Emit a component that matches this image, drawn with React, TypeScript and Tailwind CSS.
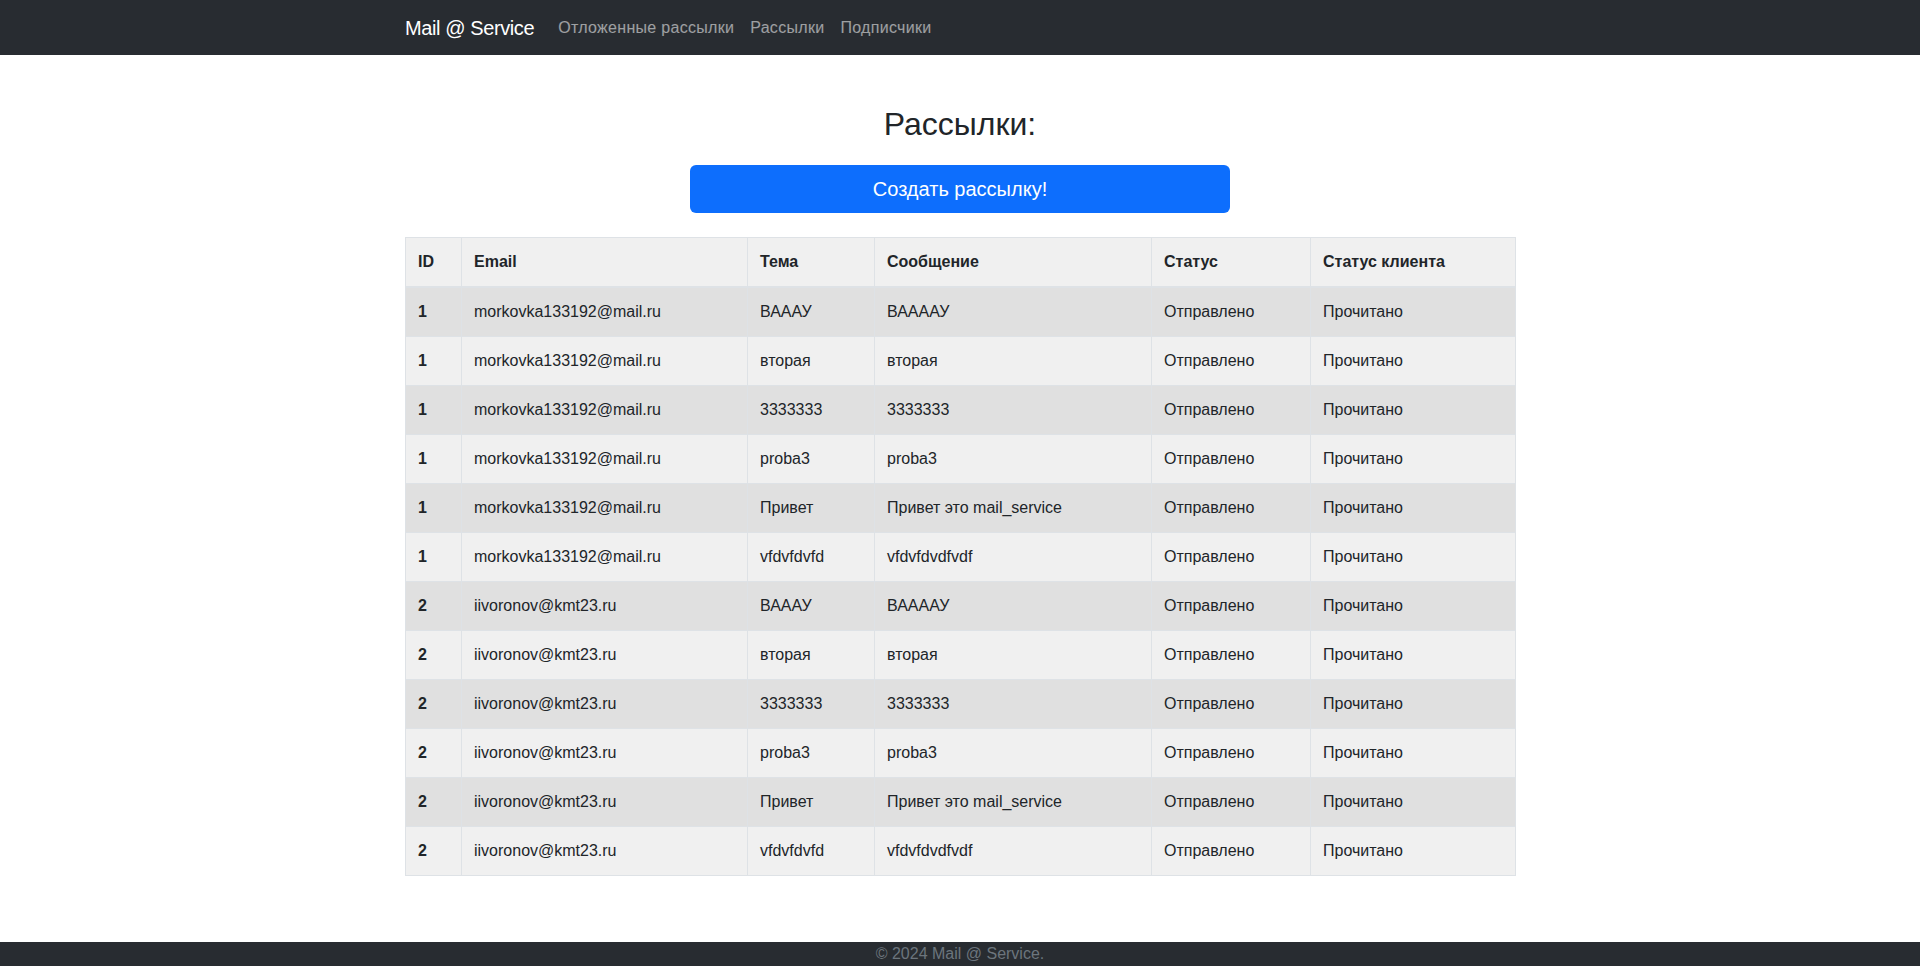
import React from "react";

const rows = [
  { id: 1, email: "morkovka133192@mail.ru", subject: "ВАААУ", message: "ВААААУ" },
  { id: 1, email: "morkovka133192@mail.ru", subject: "вторая", message: "вторая" },
  { id: 1, email: "morkovka133192@mail.ru", subject: "3333333", message: "3333333" },
  { id: 1, email: "morkovka133192@mail.ru", subject: "proba3", message: "proba3" },
  { id: 1, email: "morkovka133192@mail.ru", subject: "Привет", message: "Привет это mail_service" },
  { id: 1, email: "morkovka133192@mail.ru", subject: "vfdvfdvfd", message: "vfdvfdvdfvdf" },
  { id: 2, email: "iivoronov@kmt23.ru", subject: "ВАААУ", message: "ВААААУ" },
  { id: 2, email: "iivoronov@kmt23.ru", subject: "вторая", message: "вторая" },
  { id: 2, email: "iivoronov@kmt23.ru", subject: "3333333", message: "3333333" },
  { id: 2, email: "iivoronov@kmt23.ru", subject: "proba3", message: "proba3" },
  { id: 2, email: "iivoronov@kmt23.ru", subject: "Привет", message: "Привет это mail_service" },
  { id: 2, email: "iivoronov@kmt23.ru", subject: "vfdvfdvfd", message: "vfdvfdvdfvdf" },
];

const headers = ["ID", "Email", "Тема", "Сообщение", "Статус", "Статус клиента"];

export default function App() {
  return (
    <div className="min-h-screen bg-white text-[#212529] font-['Liberation_Sans',Arial,sans-serif] text-base leading-6">
      {/* Top navbar */}
      <nav className="bg-[#282c31] h-[55px]">
        <div className="w-[1110px] mx-auto h-full flex items-center">
          <a className="text-white text-[20px] leading-[30px] mr-4 tracking-[-0.4px]">Mail @ Service</a>
          <div className="flex items-center tracking-[0.3px]">
            <a className="px-2 text-white/55">Отложенные рассылки</a>
            <a className="px-2 text-white/55">Рассылки</a>
            <a className="px-2 text-white/55">Подписчики</a>
          </div>
        </div>
      </nav>

      {/* Main content */}
      <main className="w-[1110px] mx-auto pt-[50px] pb-[66px]">
        <h2 className="text-center text-[32px] leading-[38px] font-medium mb-[22px]">Рассылки:</h2>

        <div className="flex justify-center mb-6">
          <button className="w-[540px] h-12 rounded-md bg-[#0d6efd] text-white text-[20px] leading-[30px]">
            Создать рассылку!
          </button>
        </div>

        <table className="w-full table-fixed border-collapse">
          <colgroup>
            <col className="w-[56px]" />
            <col className="w-[286px]" />
            <col className="w-[127px]" />
            <col className="w-[277px]" />
            <col className="w-[159px]" />
            <col className="w-[205px]" />
          </colgroup>
          <thead>
            <tr className="bg-[#f0f0f0]">
              {headers.map((h) => (
                <th
                  key={h}
                  className="text-left font-bold px-3 py-3 border border-[#dee2e6] border-b-2"
                >
                  {h}
                </th>
              ))}
            </tr>
          </thead>
          <tbody>
            {rows.map((r, i) => (
              <tr key={i} className={i % 2 === 0 ? "bg-[#e0e0e0]" : "bg-[#f0f0f0]"}>
                <th className="text-left font-bold px-3 py-3 border border-[#dee2e6]">{r.id}</th>
                <td className="px-3 py-3 border border-[#dee2e6]">{r.email}</td>
                <td className="px-3 py-3 border border-[#dee2e6]">{r.subject}</td>
                <td className="px-3 py-3 border border-[#dee2e6]">{r.message}</td>
                <td className="px-3 py-3 border border-[#dee2e6]">Отправлено</td>
                <td className="px-3 py-3 border border-[#dee2e6]">Прочитано</td>
              </tr>
            ))}
          </tbody>
        </table>
      </main>

      {/* Footer */}
      <footer className="bg-[#282c31] h-6 text-center text-[#6c757d] leading-6">
        © 2024 Mail @ Service.
      </footer>
    </div>
  );
}
